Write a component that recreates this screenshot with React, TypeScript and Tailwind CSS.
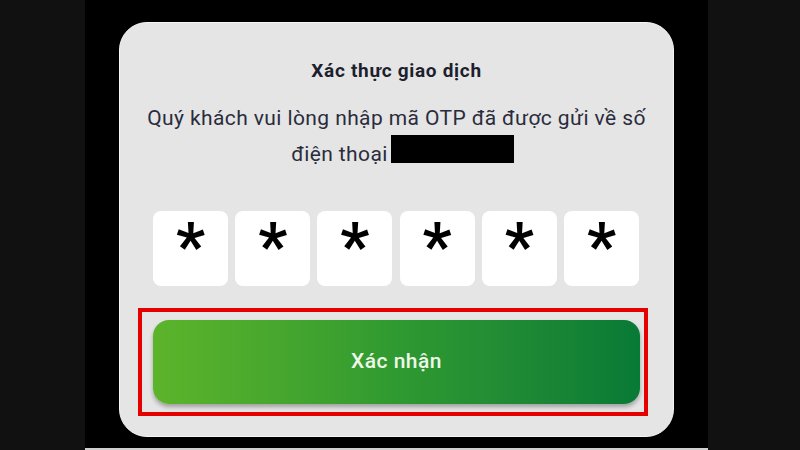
export default function App() {
  const digits = ['*', '*', '*', '*', '*', '*'];

  return (
    <div className="flex h-[450px] w-[800px] overflow-hidden bg-[#111111] font-['Roboto','Noto_Sans',sans-serif]">
      <div className="w-[85px] shrink-0" />

      {/* phone screen */}
      <div className="flex w-[623px] shrink-0 flex-col bg-black">
        <div className="mx-[34px] mt-[22px] flex h-[415px] flex-col rounded-[28px] border-[1.5px] border-[#f6f6f6] bg-[#e5e5e5] pt-[36px]">
          <h1 className="text-center text-[19px] font-bold leading-[24px] tracking-[0.7px] text-[#1d1f2e]">
            Xác thực giao dịch
          </h1>

          <p className="mt-[20px] px-[10px] text-center text-[21px] leading-[30px] tracking-[0.4px] text-[#2a2c3c]">
            <span className="block">Quý khách vui lòng nhập mã OTP đã được gửi về số</span>
            <span className="block pl-[12px]">
              điện thoại<span className="ml-[3px] inline-block h-[28px] w-[123px] translate-y-[2px] bg-black" />
            </span>
          </p>

          <div className="ml-[33px] mt-[42px] flex w-[486px] justify-between">
            {digits.map((d, i) => (
              <div
                key={i}
                className="flex h-[75px] w-[75px] items-start justify-center rounded-[8px] bg-white"
              >
                <span className="mt-[4px] text-[64px] font-bold leading-none text-black">{d}</span>
              </div>
            ))}
          </div>

          {/* highlighted confirm button */}
          <div className="ml-[18px] mt-[22px] w-[510px] border-4 border-[#e50000] py-[8px] pl-[11px] pr-[4px]">
            <button
              type="button"
              className="flex h-[84px] w-full items-center justify-center rounded-[16px] bg-gradient-to-r from-[#5cb42a] via-[#2f9a30] to-[#077a36] text-[21px] font-medium tracking-[0.5px] text-[#eef7ea] shadow-[0_3px_4px_rgba(0,0,0,0.3)]"
            >
              Xác nhận
            </button>
          </div>
        </div>
        <div className="flex-1" />
        <div className="h-[2px] bg-[#cfcfcf]" />
      </div>

      <div className="flex-1" />
    </div>
  );
}
